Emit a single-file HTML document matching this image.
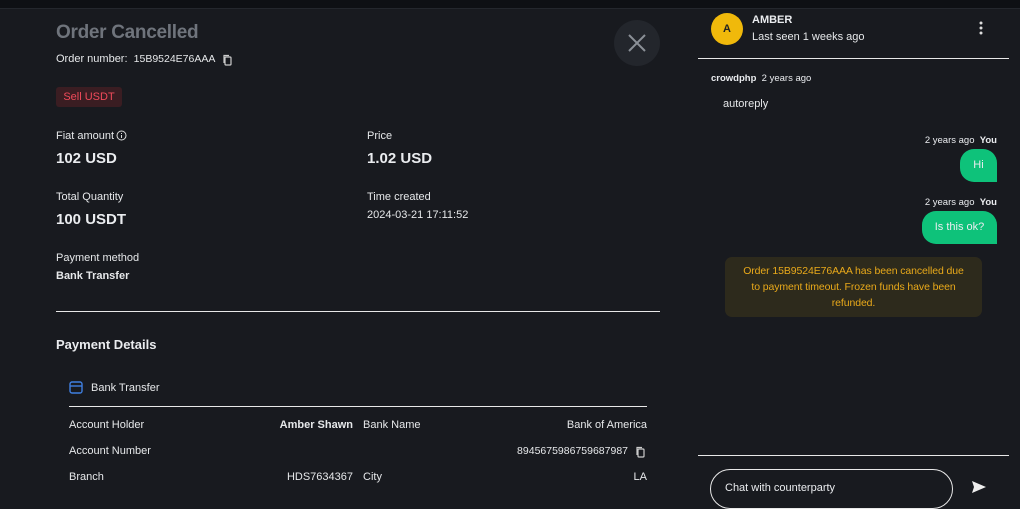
<!DOCTYPE html><html><head><style>
*{margin:0;padding:0;box-sizing:border-box}
body{width:1020px;height:505px;background:#181a1f;font-family:"Liberation Sans",sans-serif;color:#eaecef;position:relative;overflow:hidden;font-size:11px}
.a{position:absolute;white-space:nowrap}
.top{left:0;top:0;width:1020px;height:9px;background:#0e1014;border-bottom:1px solid #24272d}
.lbl{font-size:11px;color:#e6e8ea}
.big{font-size:15px;font-weight:bold}
.line{position:absolute;height:1px;background:#e8e8e8}
</style></head><body>
<div class="a top"></div>
<div class="a" style="left:56px;top:22px;font-size:19px;color:#6f747c;font-weight:bold;letter-spacing:-0.3px">Order Cancelled</div>
<div class="a lbl" style="left:56px;top:53px">Order number:&nbsp; <span style="font-size:10.5px">15B9524E76AAA</span></div>
<svg class="a" style="left:222px;top:54px" width="11" height="12" viewBox="0 0 11 12"><rect x="3" y="3" width="6" height="8" rx="1" fill="none" stroke="#ccc" stroke-width="1.2"/><path d="M2 9V1.5h5" fill="none" stroke="#ccc" stroke-width="1.2"/></svg>
<div class="a" style="left:614px;top:20px;width:46px;height:46px;border-radius:50%;background:#23262c"></div>
<svg class="a" style="left:627px;top:33px" width="20" height="20"><path d="M2 2L18 18M18 2L2 18" stroke="#8b9097" stroke-width="2"/></svg>
<div class="a" style="left:56px;top:87px;width:66px;height:20px;background:#3a1d22;border-radius:3px;color:#f04a5a;font-size:11px;text-align:center;line-height:20px">Sell USDT</div>
<div class="a lbl" style="left:56px;top:130px">Fiat amount</div>
<svg class="a" style="left:116px;top:130px" width="11" height="11"><circle cx="5.5" cy="5.5" r="4.5" fill="none" stroke="#ddd"/><path d="M5.5 5v3M5.5 3v1" stroke="#ddd"/></svg>
<div class="a big" style="left:56px;top:150px">102 USD</div>
<div class="a lbl" style="left:367px;top:130px">Price</div>
<div class="a big" style="left:367px;top:150px">1.02 USD</div>
<div class="a lbl" style="left:56px;top:191px">Total Quantity</div>
<div class="a big" style="left:56px;top:211px">100 USDT</div>
<div class="a lbl" style="left:367px;top:191px">Time created</div>
<div class="a lbl" style="left:367px;top:209px">2024-03-21 17:11:52</div>
<div class="a lbl" style="left:56px;top:252px">Payment method</div>
<div class="a lbl" style="left:56px;top:270px;font-weight:bold">Bank Transfer</div>
<div class="line" style="left:56px;top:311px;width:604px"></div>
<div class="a" style="left:56px;top:337px;font-size:13px;font-weight:bold">Payment Details</div>
<svg class="a" style="left:69px;top:381px" width="14" height="13"><rect x="1" y="1" width="12" height="11" rx="2" fill="none" stroke="#3f7fe0" stroke-width="1.4"/><path d="M1 5h12" stroke="#3f7fe0" stroke-width="1.4"/></svg>
<div class="a lbl" style="left:91px;top:382px">Bank Transfer</div>
<div class="line" style="left:69px;top:406px;width:578px"></div>
<div class="a lbl" style="left:69px;top:419px">Account Holder</div>
<div class="a lbl" style="right:667px;top:419px;font-weight:bold">Amber Shawn</div>
<div class="a lbl" style="left:363px;top:419px">Bank Name</div>
<div class="a lbl" style="right:373px;top:419px">Bank of America</div>
<div class="a lbl" style="left:69px;top:445px">Account Number</div>
<div class="a lbl" style="right:392px;top:445px;font-size:10.5px">8945675986759687987</div>
<svg class="a" style="left:635px;top:446px" width="11" height="12" viewBox="0 0 11 12"><rect x="3" y="3" width="6" height="8" rx="1" fill="none" stroke="#ccc" stroke-width="1.2"/><path d="M2 9V1.5h5" fill="none" stroke="#ccc" stroke-width="1.2"/></svg>
<div class="a lbl" style="left:69px;top:471px">Branch</div>
<div class="a lbl" style="right:667px;top:471px">HDS7634367</div>
<div class="a lbl" style="left:363px;top:471px">City</div>
<div class="a lbl" style="right:373px;top:471px">LA</div>
<!-- chat -->
<div class="a" style="left:711px;top:13px;width:32px;height:32px;border-radius:50%;background:#f0b90b;color:#222;font-size:11px;font-weight:bold;text-align:center;line-height:32px">A</div>
<div class="a" style="left:752px;top:14px;font-size:11px;font-weight:bold">AMBER</div>
<div class="a lbl" style="left:752px;top:31px">Last seen 1 weeks ago</div>
<svg class="a" style="left:979px;top:21px" width="4" height="14"><circle cx="2" cy="2" r="1.5" fill="#ddd"/><circle cx="2" cy="7" r="1.5" fill="#ddd"/><circle cx="2" cy="12" r="1.5" fill="#ddd"/></svg>
<div class="line" style="left:698px;top:58px;width:311px"></div>
<div class="a" style="left:711px;top:73px;font-size:9.5px"><b>crowdphp</b>&nbsp; 2 years ago</div>
<div class="a lbl" style="left:723px;top:98px">autoreply</div>
<div class="a" style="right:23px;top:135px;font-size:9.5px">2 years ago&nbsp; <b>You</b></div>
<div class="a" style="left:960px;top:149px;width:37px;height:33px;background:#0ec27a;border-radius:14px 14px 0 14px;text-align:center;line-height:33px;font-size:11px">Hi</div>
<div class="a" style="right:23px;top:197px;font-size:9.5px">2 years ago&nbsp; <b>You</b></div>
<div class="a" style="left:922px;top:211px;width:75px;height:33px;background:#0ec27a;border-radius:14px 14px 0 14px;text-align:center;line-height:33px;font-size:11px">Is this ok?</div>
<div class="a" style="left:725px;top:257px;width:257px;height:60px;background:#2d2a1c;border-radius:7px;color:#e9a91a;font-size:10.5px;white-space:normal;text-align:center;padding:6px 18px;line-height:16px;letter-spacing:-0.1px">Order 15B9524E76AAA has been cancelled due to payment timeout. Frozen funds have been refunded.</div>
<div class="line" style="left:698px;top:455px;width:311px"></div>
<div class="a" style="left:710px;top:469px;width:243px;height:40px;border:1px solid #e8e8e8;border-radius:20px;padding:12px 14px;font-size:11px">Chat with counterparty</div>
<svg class="a" style="left:971px;top:480px" width="16" height="14"><path d="M1 1L15 7L1 13L3 7Z" fill="#eee"/></svg>
</body></html>
